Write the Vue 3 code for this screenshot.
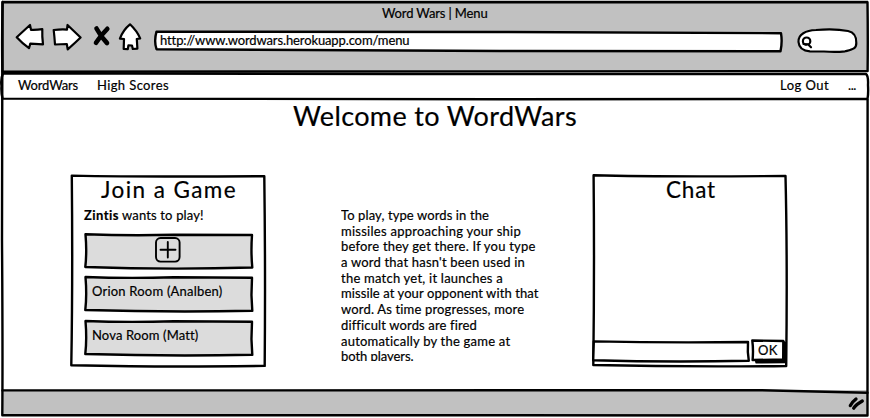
<script setup>
const vFit = {
  mounted(el, { value }) {
    const width = el.getBoundingClientRect().width
    el.style.letterSpacing = `${(value - width) / el.textContent.length}px`
  },
}

const rooms = [
  { name: 'Orion Room (Analben)', width: 130.5 },
  { name: 'Nova Room (Matt)', width: 106 },
]

const instructions = [
  { text: 'To play, type words in the', width: 148 },
  { text: 'missiles approaching your ship', width: 180 },
  { text: 'before they get there. If you type', width: 194.5 },
  { text: "a word that hasn't been used in", width: 184 },
  { text: 'the match yet, it launches a', width: 162 },
  { text: 'missile at your opponent with that', width: 197.5 },
  { text: 'word. As time progresses, more', width: 183.5 },
  { text: 'difficult words are fired', width: 135 },
  { text: 'automatically by the game at', width: 169.5 },
  { text: 'both players.', width: 72.5 },
]
</script>

<template>
  <div class="window">
    <header class="chrome">
      <div class="title"><span v-fit="105.5">Word Wars | Menu</span></div>
      <div class="toolbar">
        <svg class="back" viewBox="14 22 32 30"><path d="M16.7 37.2 L30 25 L31 29.8 Q37 30 42.3 29.2 Q42 36 43 44.3 L30.3 43.6 L29 48.2 Q22 43 16.7 37.2Z" /></svg>
        <svg class="forward" viewBox="50 22 34 30"><path d="M80.6 37.5 L67.5 25 L67 29.6 Q61 29.2 53.7 30 Q54.5 37 55 44.5 L66.8 44 L67.7 49.3 Q75 43 80.6 37.5Z" /></svg>
        <svg class="stop" viewBox="92 22 20 30"><path d="M96.5 28.5 Q101 37 107 43 M107.3 28.8 Q101 35 96 42.8" /></svg>
        <svg class="home" viewBox="117 22 26 30"><path d="M130 24.3 Q137 31 140.2 38.4 L136.8 39 L137.4 48.6 L132.8 49 L132 45.5 L128.4 45.3 L127.8 49.2 L123.7 49 L124 39 L119.9 38.6 Q123 30 130 24.3Z" /></svg>
        <div class="address">
          <svg class="frame" viewBox="152 22 632 37"><path d="M156.5 31.6 Q300 32.5 500 32 L781 33.2 Q782.5 42 780.5 51.3 L500 51 Q300 50 156.5 49.2 Q153.8 41 156.5 31.6Z" /></svg>
          <span v-fit="249">http://www.wordwars.herokuapp.com/menu</span>
        </div>
        <svg class="search" viewBox="796 22 64 34"><path d="M798.5 42 C798 34 806 30.5 816 30 Q835 28.5 848 31 C855 32.5 856.5 38 856.3 43 C856.5 49 852 49.5 845 51.3 Q836 52.5 824 51.5 L810 51.3 C803 51 799 48 798.5 42Z" /><circle cx="806.6" cy="41.2" r="3.7" /><path d="M803.5 44 L808 44.3 L811 47.3" /></svg>
      </div>
    </header>

    <nav class="nav">
      <svg class="frame" viewBox="0 73 870 28"><path d="M3 73.2 Q160 74.2 400 74 L866 74 Q868.5 76 868 85 Q868.5 94 867.5 99 L500 99.2 Q200 99.3 2.5 98.6 Q1 92 1.5 86 Q.5 79 3 73.2Z" /></svg>
      <span v-fit="60">WordWars</span>
      <span v-fit="72">High Scores</span>
      <span class="logout" v-fit="49">Log Out</span>
      <span v-fit="8">...</span>
    </nav>

    <main class="content">
      <h1><span v-fit="284">Welcome to WordWars</span></h1>
      <div class="columns">
        <section class="card join">
          <svg class="frame" viewBox="70 174 196 194"><path d="M71.8 175.6 Q140 177 264.3 176.2 Q265.5 270 264.7 365.9 Q190 366.8 130 366.2 L71.3 365.3 Q72.8 280 71.8 175.6Z" /></svg>
          <h2><span v-fit="136">Join a Game</span></h2>
          <p class="invite"><b v-fit="35">Zintis</b><span v-fit="85"> wants to play!</span></p>
          <div class="rooms">
            <button class="room create">
              <svg class="frame" viewBox="0 0 170 38"><path d="M1.5 2.3 Q45 3.8 90 2.8 L168 3 Q166.8 20 168.3 35.5 Q85 38 1.3 35 Q3 20 1.5 2.3Z" /></svg>
              <svg class="plus" viewBox="0 0 26 26"><rect x="1" y="1" width="23.6" height="23.6" rx="4.5" /><path d="M5.5 12.7 H20.5 M12.8 5 V20.5" /></svg>
            </button>
            <button v-for="room in rooms" :key="room.name" class="room">
              <svg class="frame" viewBox="0 0 170 38"><path d="M1.5 2 Q45 3.7 90 2.2 L168 2.8 Q166.8 20 168.3 35.8 Q85 37.5 1.3 35 Q3 20 1.5 2Z" /></svg>
              <span v-fit="room.width">{{ room.name }}</span>
            </button>
          </div>
        </section>

        <article class="instructions">
          <div v-for="line in instructions" :key="line.text"><span v-fit="line.width">{{ line.text }}</span></div>
        </article>

        <section class="card chat">
          <svg class="frame" viewBox="592 174 196 194"><path d="M593.6 175.3 Q660 177 785.5 176 Q787.5 260 786.2 366 Q690 367.2 593.3 365 Q594.5 270 593.6 175.3Z" /></svg>
          <h2><span v-fit="50">Chat</span></h2>
          <div class="compose">
            <div class="message">
              <svg class="frame" viewBox="592 339 159 25"><path d="M593.8 341.4 Q670 343 748 342 Q747.3 352 748.8 360.8 Q670 362.5 593.2 360.3Z" /></svg>
            </div>
            <button class="send">
              <svg class="frame" viewBox="751 339 37 25"><path class="shade" d="M756 360.3 L783.5 360.3 L783.5 342 L785.8 343.5 L785.5 362 L756.5 362.4Z" /><path d="M752.3 340.5 L783.3 341 L783.2 359.5 L752.6 360 Q753.5 350 752.3 340.5Z" /></svg>
              <span v-fit="19.5">OK</span>
            </button>
          </div>
        </section>
      </div>
    </main>

    <footer class="status">
      <svg viewBox="840 396 28 20"><path d="M850.3 407.6 Q851.5 404.5 856 401 M853.7 410.2 Q856 406.5 862.3 403" /></svg>
    </footer>

    <svg class="outline" viewBox="0 0 870 418">
      <path d="M2.5 2.2 L867.5 2.2 Q868 38 867.6 71 Q500 72.5 2.5 71.8Z" />
      <path d="M2.6 2 Q1.8 35 2.3 70 L2 240 Q2.8 350 2.3 415.3 L300 415.2 Q600 416 867.5 415.5 Q868 250 867.6 100" />
      <path d="M2.5 390.4 Q300 390.4 760 390.2 Q810 391.3 867.5 392.7" />
    </svg>
  </div>
</template>

<style>
body {
  background: #fff;
}
</style>

<style scoped>
* {
  box-sizing: border-box;
}
.window {
  position: relative;
  width: 870px;
  height: 418px;
  display: flex;
  flex-direction: column;
  overflow: hidden;
  background: #fff;
  color: #000;
  font: 13px/16px Lato, "Open Sans", sans-serif;
  -webkit-text-stroke: 0.2px #000;
}
svg {
  display: block;
  overflow: visible;
  fill: #fff;
  stroke: #000;
  stroke-width: 2.2;
  stroke-linejoin: round;
  stroke-linecap: round;
}
span, b {
  position: relative;
  display: inline-block;
  white-space: pre;
}
.frame, .outline {
  position: absolute;
  top: 0;
  left: 0;
  width: 100%;
  height: 100%;
}
.frame {
  stroke-width: 2.4;
}
.outline {
  fill: none;
  stroke-width: 2.4;
  pointer-events: none;
}
.chrome {
  height: 72px;
  margin: 0 2px;
  padding: 5px 0 0 12px;
  background: #c1c1c1;
}
.title {
  padding-left: 368px;
  height: 17px;
}
.toolbar {
  display: flex;
  align-items: flex-start;
}
.back { width: 32px; height: 30px; margin-right: 4px; }
.forward { width: 34px; height: 30px; margin-right: 8px; }
.stop { width: 20px; height: 30px; margin-right: 5px; }
.stop path { fill: none; stroke-width: 4.6; }
.home { width: 26px; height: 30px; margin-right: 9px; }
.address {
  position: relative;
  width: 632px;
  height: 37px;
  margin-right: 12px;
  padding: 10px 8px;
}
.search { width: 64px; height: 34px; }
.nav {
  position: relative;
  display: flex;
  height: 28px;
  margin-top: 1px;
  padding: 4px 14px 0 18px;
  gap: 19px;
}
.logout { margin-left: auto; }
.content {
  height: 289px;
}
h1, h2, p {
  margin: 0;
  font-weight: 400;
}
h1 {
  height: 75px;
  padding-left: 293px;
  font-size: 27px;
  line-height: 30px;
}
.columns {
  display: flex;
  align-items: flex-start;
  padding-left: 70px;
}
.card {
  position: relative;
  width: 196px;
  height: 194px;
  margin-top: -2px;
}
h2 {
  position: relative;
  height: 33px;
  padding: 2px 0 0 2px;
  font-size: 22.5px;
  line-height: 27px;
  text-align: center;
}
.invite {
  padding-left: 14px;
  display: flex;
}
.rooms {
  display: grid;
  gap: 5.5px;
  padding: 8.5px 0 0 14px;
}
.room {
  position: relative;
  display: flex;
  align-items: flex-start;
  width: 170px;
  height: 38px;
  padding: 8px;
  border: 0;
  background: none;
  color: inherit;
  font: inherit;
  text-align: left;
}
.room .frame { fill: #dcdcdc; }
.create { padding: 5px 0 0 71px; }
.plus {
  position: relative;
  width: 26px;
  height: 26px;
  fill: none;
  stroke-width: 1.9;
}
.instructions {
  width: 210px;
  height: 154px;
  margin: 31px 41px 0 75px;
  padding-top: 1px;
  overflow: hidden;
  line-height: 15.7px;
}
.instructions div { height: 15.7px; }
.compose {
  display: flex;
  padding-top: 132px;
}
.message {
  position: relative;
  width: 159px;
  height: 25px;
}
.send {
  position: relative;
  display: flex;
  align-items: flex-start;
  width: 37px;
  height: 25px;
  padding: 3px 0 0 7px;
  border: 0;
  background: none;
  color: inherit;
  font: inherit;
}
.shade { fill: #000; }
.status {
  display: flex;
  justify-content: flex-end;
  height: 25px;
  margin: 0 2px;
  padding-top: 4px;
  background: #c1c1c1;
}
.status svg {
  width: 28px;
  height: 20px;
  fill: none;
  stroke-width: 3.3;
}
</style>
